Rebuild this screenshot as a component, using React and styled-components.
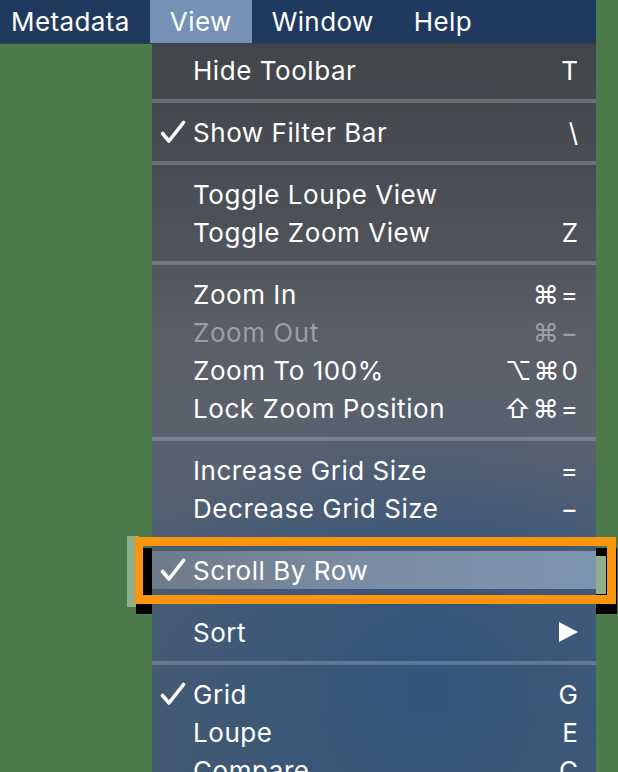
import React from "react";
import styled, { createGlobalStyle } from "styled-components";

const GlobalStyle = createGlobalStyle`
  html, body {
    margin: 0;
    padding: 0;
    background: #4c7a4a;
  }
  body {
    font-family: Inter, "Noto Sans", "DejaVu Sans", sans-serif;
  }
`;

const Screen = styled.div`
  position: relative;
  width: 618px;
  height: 772px;
  overflow: hidden;
  background: #4c7a4a;
`;

const MenuBar = styled.div`
  display: flex;
  width: 596px;
  height: 43px;
  background: #203a5f;
  border-bottom: 1px solid #2b4a33;
  color: #fff;
  font-size: 26px;
  letter-spacing: 0.4px;
`;

const MenuTitle = styled.div`
  display: flex;
  align-items: center;
  padding: 0 20px;
  background: ${(p) => (p.$active ? "#7591b5" : "transparent")};
  &:first-child {
    padding-left: 11px;
    padding-right: 20px;
  }
`;

const Dropdown = styled.div`
  position: relative;
  z-index: 1;
  width: 444px;
  margin-left: 152px;
  padding-top: 7px;
  background:
    radial-gradient(ellipse 70% 40% at 62% 86%, rgba(40, 80, 130, 0.7), rgba(40, 80, 130, 0) 100%),
    linear-gradient(180deg, #42454a 0%, #4c4f55 22%, #5b5f66 40%, #5a6270 55%, #4a5d74 70%, #455a70 100%);
  color: #fff;
  font-size: 26px;
  letter-spacing: 0.55px;
`;

const Item = styled.div`
  display: grid;
  grid-template-columns: 41px 1fr auto;
  align-items: center;
  height: 38px;
  padding-right: 18px;
  color: ${(p) => (p.$disabled ? "#9b9ea4" : "#fff")};
  background: ${(p) =>
    p.$selected
      ? "linear-gradient(90deg, #6f7b89 0%, #7a8ca2 45%, #7d94b0 100%)"
      : "transparent"};
`;

const CheckCell = styled.div`
  display: flex;
  align-items: center;
  padding-left: 8px;
`;

const Shortcut = styled.span`
  font-family: Inter, "DejaVu Sans", sans-serif;
  letter-spacing: 2px;
  margin-right: -2px;
  white-space: pre;
`;

const Separator = styled.div`
  height: 4px;
  margin: 10px 0;
  background: rgba(255, 255, 255, 0.2);
`;

const Callout = styled.div`
  position: absolute;
  left: 135px;
  top: 537px;
  width: 481px;
  height: 67px;
  box-sizing: border-box;
  border: 9px solid #fb940f;
  border-left-width: 8px;
  z-index: 2;
  pointer-events: none;
`;

const CalloutShadow = styled.div`
  position: absolute;
  left: 136px;
  top: 548px;
  width: 481px;
  height: 66px;
  background: #000;
  z-index: 0;
`;

const CalloutHalo = styled.div`
  position: absolute;
  left: ${(p) => p.$left}px;
  top: ${(p) => p.$top}px;
  width: ${(p) => p.$width}px;
  height: ${(p) => p.$height}px;
  background: #8fb08c;
  z-index: 0;
`;

const Check = () => (
  <svg width="26" height="24" viewBox="0 0 26 24">
    <path
      d="M2.5 13.5 L9 21 L23.5 2.5"
      fill="none"
      stroke="#fff"
      strokeWidth="3.6"
      strokeLinecap="round"
      strokeLinejoin="round"
    />
  </svg>
);

const Arrow = () => (
  <svg width="19" height="20" viewBox="0 0 19 20">
    <polygon points="0,0 19,10 0,20" fill="#fff" />
  </svg>
);

const menu = [
  { label: "Hide Toolbar", key: "T" },
  "sep",
  { label: "Show Filter Bar", key: "\\", checked: true },
  "sep",
  { label: "Toggle Loupe View" },
  { label: "Toggle Zoom View", key: "Z" },
  "sep",
  { label: "Zoom In", key: "⌘=" },
  { label: "Zoom Out", key: "⌘−", disabled: true },
  { label: "Zoom To 100%", key: "⌥⌘0" },
  { label: "Lock Zoom Position", key: "⇧⌘=" },
  "sep",
  { label: "Increase Grid Size", key: "=" },
  { label: "Decrease Grid Size", key: "−" },
  "sep",
  { label: "Scroll By Row", checked: true, selected: true },
  "sep",
  { label: "Sort", submenu: true },
  "sep",
  { label: "Grid", key: "G", checked: true },
  { label: "Loupe", key: "E" },
  { label: "Compare", key: "C" },
];

export default function App() {
  return (
    <Screen>
      <GlobalStyle />
      <MenuBar>
        <MenuTitle>Metadata</MenuTitle>
        <MenuTitle $active>View</MenuTitle>
        <MenuTitle>Window</MenuTitle>
        <MenuTitle>Help</MenuTitle>
      </MenuBar>
      <Dropdown>
        {menu.map((item, i) =>
          item === "sep" ? (
            <Separator key={i} />
          ) : (
            <Item key={i} $disabled={item.disabled} $selected={item.selected}>
              <CheckCell>{item.checked && <Check />}</CheckCell>
              <span>{item.label}</span>
              {item.submenu ? <Arrow /> : <Shortcut>{item.key || ""}</Shortcut>}
            </Item>
          )
        )}
      </Dropdown>
      <CalloutHalo $left={127} $top={536} $width={12} $height={71} />
      <CalloutShadow />
      <CalloutHalo $left={596} $top={556} $width={10} $height={38} />
      <Callout />
    </Screen>
  );
}
